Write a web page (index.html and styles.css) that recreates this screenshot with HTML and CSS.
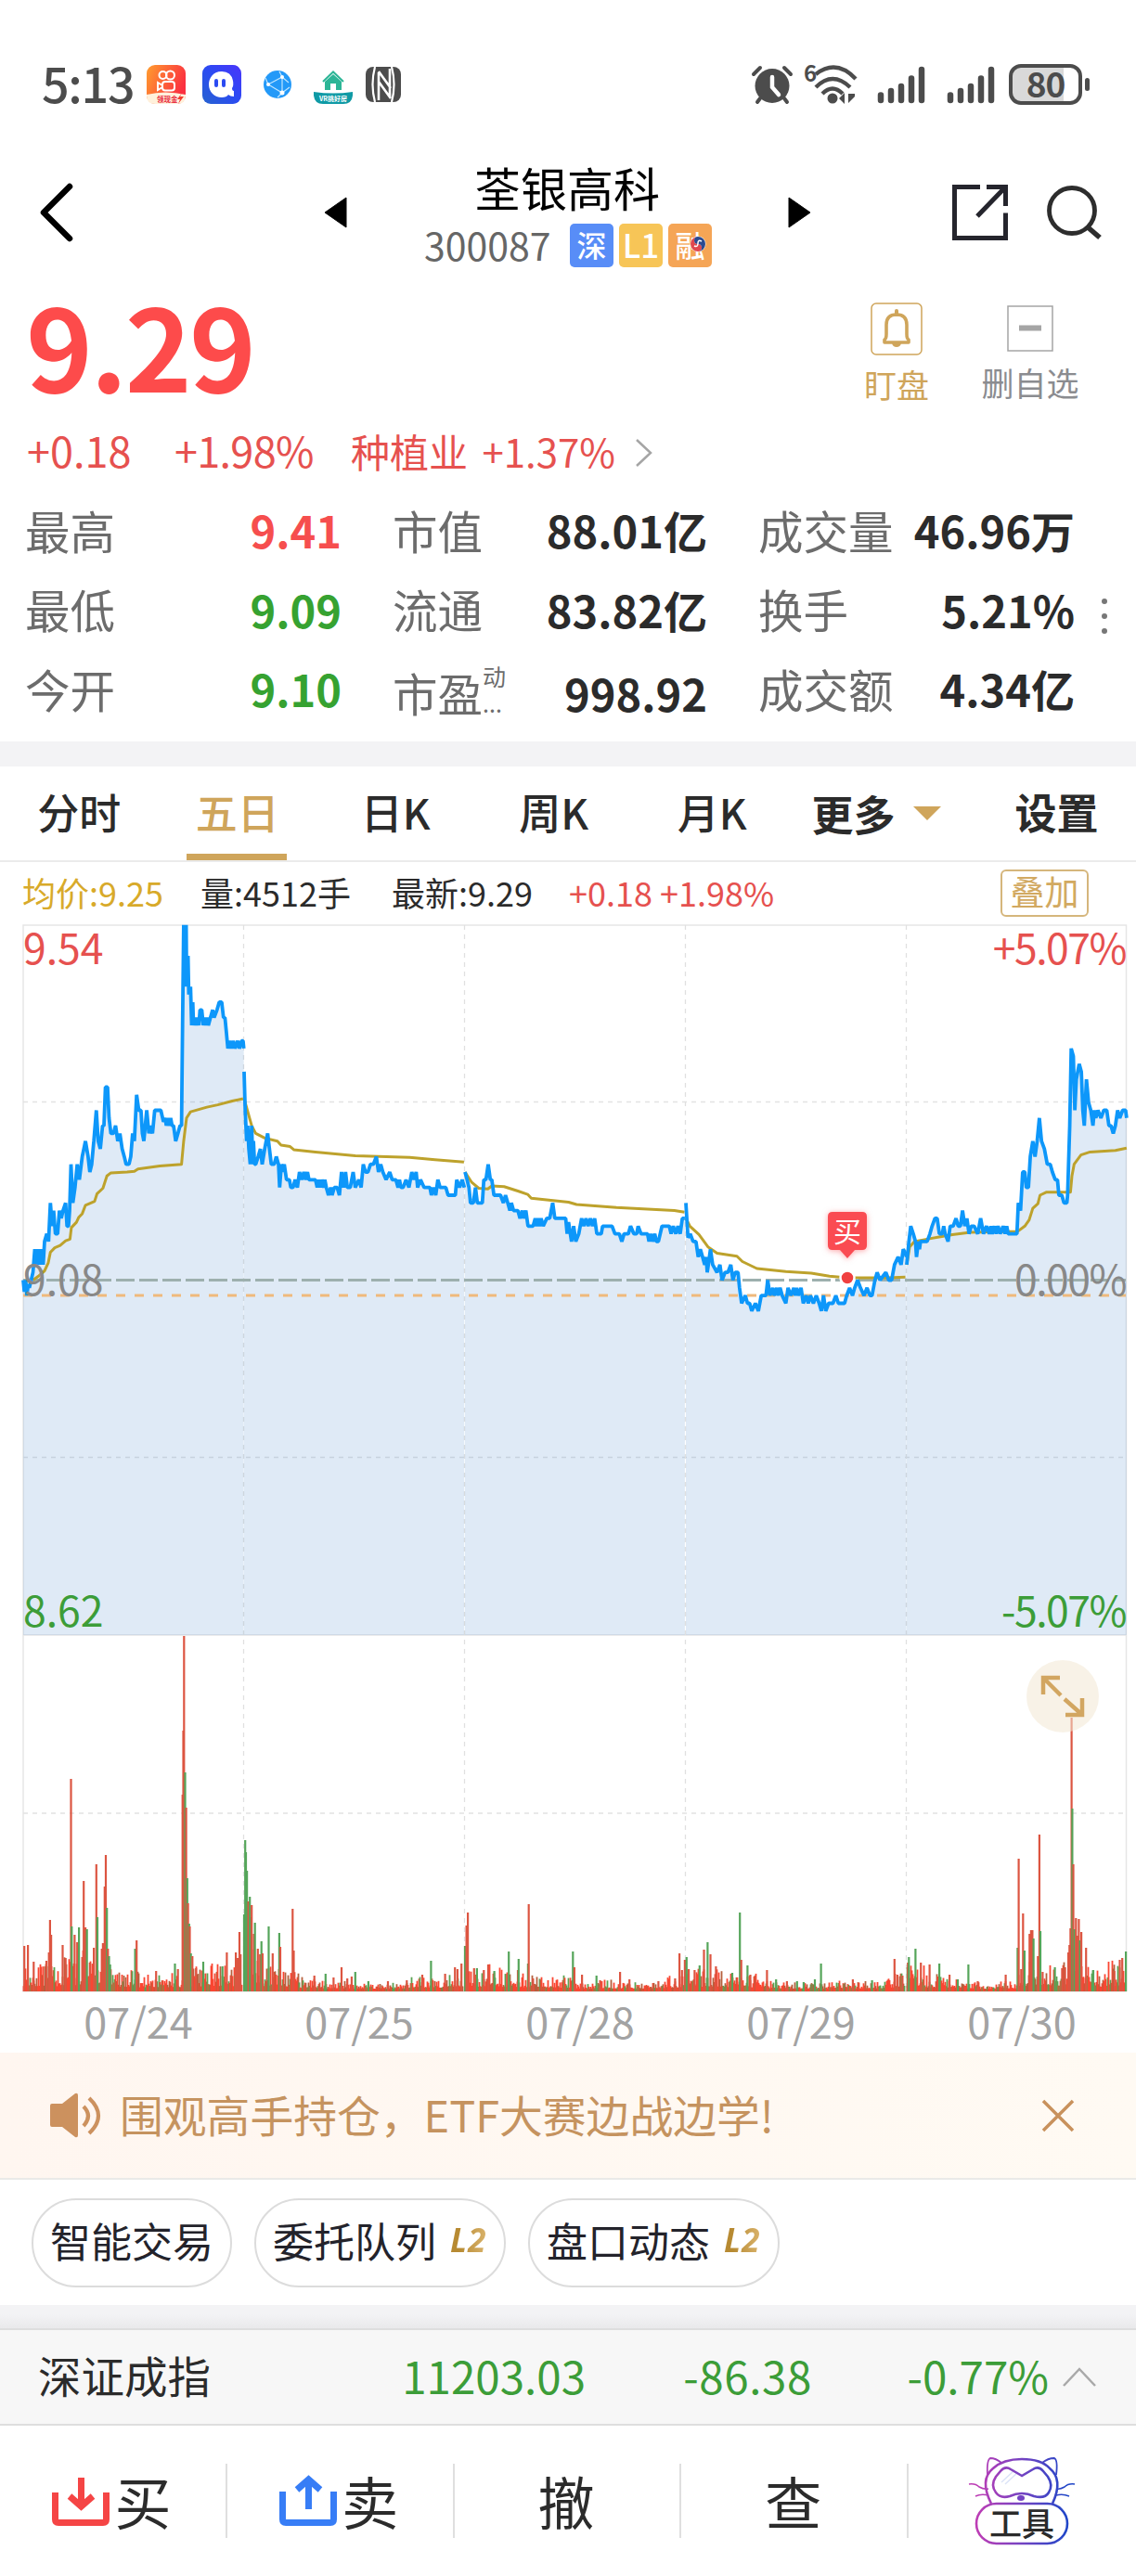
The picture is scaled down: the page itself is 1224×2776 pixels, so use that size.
FILE: index.html
```
<!DOCTYPE html>
<html lang="zh-CN">
<head>
    <meta charset="UTF-8">
    <meta name="viewport" content="width=device-width, initial-scale=1.0">
    <title>荃银高科 300087</title>
    <link rel="stylesheet" href="styles.css">
</head>
<body>
    <div class="status-bar">
        <span class="clock">5:13</span>
        <svg class="app-kuai" width="42" height="42" viewBox="0 0 42 42">
            <defs>
                <linearGradient id="kuai" x1="0" y1="0" x2="1" y2="0.4"><stop offset="0" stop-color="#ff9d2e"/><stop offset="1" stop-color="#fb3040"/></linearGradient>
            </defs>
            <rect width="42" height="42" rx="9" fill="url(#kuai)"/>
            <path d="M0 32Q20 27 42 32V33Q42 42 33 42H9Q0 42 0 33Z" fill="#fff1dc"/>
            <g fill="none" stroke="#fff" stroke-width="2">
                <circle cx="17.500" cy="11" r="4"/><circle cx="25.500" cy="11" r="4.500"/>
                <rect x="17" y="18" width="13" height="9.500" rx="3"/><path d="M17 22L12 19V27L17 24"/>
            </g>
            <text x="11" y="40" font-size="7.500" font-weight="bold" fill="#e8283a">领现金</text>
            <path d="M38 30L33 37H36L34 42L40 34H36Z" fill="#f33a2c"/>
        </svg>
        <svg class="app-chat" width="42" height="42" viewBox="0 0 42 42">
            <defs>
                <linearGradient id="chat" x1="0" y1="1" x2="1" y2="0"><stop offset="0" stop-color="#2763cf"/><stop offset="0.500" stop-color="#2b4bf2"/><stop offset="1" stop-color="#4a35fb"/></linearGradient>
            </defs>
            <rect width="42" height="42" rx="9" fill="url(#chat)"/>
            <path d="M21 7C11 7 7 15 7 21C7 29 13 35 21 35C24 35 27 34 28 32Q30 34 34 34V28Q32 28 32 25Q34 22 33 17Q31 7 21 7Z" fill="#fff"/>
            <rect x="13" y="15" width="4" height="9" rx="2" fill="#2b4bf2"/><rect x="21" y="15" width="4" height="9" rx="2" fill="#2b4bf2"/>
        </svg>
        <svg class="app-globe" width="30" height="30" viewBox="0 0 30 30">
            <circle cx="15" cy="15" r="15" fill="#2399f8"/>
            <path d="M5 15L20 7L27 13M5 15L20 24L28 18M20 7L20 24M5 15L2 8M20 7L17 1M20 24L15 29" stroke="#bfe5ff" stroke-width="1.200" fill="none"/>
            <circle cx="5" cy="15" r="2" fill="#fff"/><circle cx="20" cy="7" r="2" fill="#fff"/><circle cx="20" cy="24" r="2.500" fill="#fff"/>
        </svg>
        <svg class="app-house" width="42" height="42" viewBox="0 0 42 42">
            <path d="M10 18L21 7.500L32 18" fill="none" stroke="#2cb596" stroke-width="2"/>
            <path d="M12 18L21 10L30 18V27H24V20H18V27H12Z" fill="#2cb596"/>
            <path d="M0 29Q21 32 42 29V33Q41 42 32 42H10Q1 42 0 33Z" fill="#0f9aa5"/>
            <text x="6" y="39" font-size="7" font-weight="bold" fill="#fff">VR挑好房</text>
        </svg>
        <svg class="app-nfc" width="38" height="38" viewBox="0 0 38 38">
            <rect width="38" height="38" rx="8" fill="#4c4c4c"/>
            <path d="M10 0Q5 19 10 38M28 0Q33 19 28 38" stroke="#fff" stroke-width="2.200" fill="none"/>
            <path d="M14 6V36M14 5L27 23M14 16L27 34M26 2V33" stroke="#fff" stroke-width="2.600" fill="none"/>
        </svg>

        <div class="status-right">
            <svg width="44" height="42" viewBox="0 0 44 42">
                <circle cx="22" cy="22.500" r="18.500" fill="#4c4c4c"/>
                <path d="M2 10L9 3M42 10L35 3M9 36L6 40M35 36L38 40" stroke="#4c4c4c" stroke-width="4" stroke-linecap="round"/>
                <path d="M22 13V24L29 32" stroke="#fff" stroke-width="4.500" stroke-linecap="round" fill="none"/>
            </svg>
            <svg class="wifi" width="58" height="42" viewBox="0 0 58 42">
                <text x="0" y="18" font-size="24" font-weight="bold" fill="#4c4c4c">6</text>
                <g fill="none" stroke="#4c4c4c" stroke-width="4.300">
                    <path d="M13 10Q35-7 56 15"/><path d="M13 24Q31 6 50 24"/><path d="M20 31Q31 20 42 31"/>
                </g>
                <circle cx="31" cy="36" r="5.500" fill="#4c4c4c"/>
                <path d="M38 36L44 30V42ZM46 31V41M48 31V41L55 34V31Z" fill="#4c4c4c"/>
            </svg>
            <svg class="signal" width="52" height="41" viewBox="0 0 52 41" stroke="#4c4c4c" stroke-width="6.500" stroke-linecap="round">
                <path d="M4 31.500V37M15 27V37M26 22V37M37 13.500V37M48 4V37"/>
            </svg>
            <svg class="signal-two" width="52" height="41" viewBox="0 0 52 41" stroke="#4c4c4c" stroke-width="6.500" stroke-linecap="round">
                <path d="M4 31.500V37M15 27V37M26 22V37M37 13.500V37M48 4V37"/>
            </svg>
            <div class="battery"><span>80</span></div>
            <div class="battery-cap"></div>
        </div>
    </div>

    <header class="header">
        <svg class="back" width="36" height="64" viewBox="0 0 36 64"><path d="M31 4L3 32L31 60" fill="none" stroke="#000" stroke-width="6.500" stroke-linecap="round" stroke-linejoin="round"/></svg>
        <svg class="prev" width="26" height="34" viewBox="0 0 26 34"><path d="M1 17L24 1V33Z" stroke="#000" stroke-linejoin="round"/></svg>
        <div class="stock">
            <h1>荃银高科</h1>
            <div class="stock-code">
                <span>300087</span>
                <b class="tag tag-blue">深</b>
                <b class="tag tag-yellow">L1</b>
                <b class="tag tag-orange">融<svg width="18" height="18" viewBox="0 0 18 18"><circle cx="9" cy="9" r="8.500" fill="#fff"/><path d="M9 1A8 8 0 0 0 9 17A4 4 0 0 0 9 9A4 4 0 0 1 9 1" fill="#e0474f"/><path d="M9 1A8 8 0 0 1 9 17A4 4 0 0 0 9 9A4 4 0 0 1 9 1" fill="#2c4a90"/><path d="M5 11Q9 13 9 8Q9 4 13 6" stroke="#fff" stroke-width="1.500" fill="none"/></svg></b>
            </div>
        </div>
        <svg class="next" width="26" height="34" viewBox="0 0 26 34"><path d="M2 1L25 17L2 33Z" stroke="#000" stroke-linejoin="round"/></svg>
        <svg class="share" width="60" height="62" viewBox="0 0 60 62" fill="none" stroke="#25252d" stroke-width="5"><path d="M30 3.500H2.500V58.500H57.500V31.500M37 3.500H57.500V24M56 5L27 35"/></svg>
        <svg class="search" width="60" height="60" viewBox="0 0 60 60" fill="none" stroke="#2d2d2d" stroke-width="4.800"><circle cx="27" cy="28" r="24.500"/><path d="M43 45L57 57" stroke-width="5.500"/></svg>
    </header>

    <section class="quote">
        <div class="price">9.29</div>
        <div class="action action-watch">
            <svg width="56" height="58" viewBox="0 0 56 58" fill="none" stroke="#cfa55b">
                <rect x="1" y="1" width="54" height="55" rx="5" stroke-width="1.500"/>
                <path d="M15 43V40Q17 39 17 34V24Q17 13 28 13Q39 13 39 24V34Q39 39 41 40V43Z" stroke-width="3.600" stroke-linejoin="round"/>
                <path d="M28 9V13" stroke-width="4" stroke-linecap="round"/><path d="M23 44H33Q32 48 28 48Q24 48 23 44Z" fill="#cfa55b" stroke="none"/>
            </svg>
            <span>盯盘</span>
        </div>
        <div class="action action-delete">
            <svg width="50" height="50" viewBox="0 0 50 50"><rect x="1" y="1" width="48" height="48" fill="none" stroke="#a5a5a5" stroke-width="1.500"/><path d="M13 24.500H37" stroke="#a5a5a5" stroke-width="6"/></svg>
            <span>删自选</span>
        </div>
    </section>

    <div class="change">
        <span class="change-value">+0.18</span>
        <span class="change-rate">+1.98%</span>
        <span class="sector">种植业 <span>+1.37%</span></span>
        <svg width="20" height="32" viewBox="0 0 20 32"><path d="M2 2L17 16L2 30" fill="none" stroke="#a5a5a5" stroke-width="2.500"/></svg>
    </div>

    <section class="stats">
        <div class="stat"><span>最高</span><b class="up">9.41</b></div>
        <div class="stat"><span>市值</span><b>88.01亿</b></div>
        <div class="stat"><span>成交量</span><b>46.96万</b></div>
        <div class="stat"><span>最低</span><b class="down">9.09</b></div>
        <div class="stat"><span>流通</span><b>83.82亿</b></div>
        <div class="stat"><span>换手</span><b>5.21%</b></div>
        <div class="stat"><span>今开</span><b class="down">9.10</b></div>
        <div class="stat stat-pe"><span>市盈</span><small><i>动</i><i>...</i></small><b>998.92</b></div>
        <div class="stat"><span>成交额</span><b>4.34亿</b></div>
        <div class="more-dots"><i></i><i></i><i></i></div>
    </section>

    <div class="divider"></div>

    <nav class="tabs">
        <div class="tab">分时</div>
        <div class="tab active">五日</div>
        <div class="tab">日K</div>
        <div class="tab">周K</div>
        <div class="tab">月K</div>
        <div class="tab-more">更多<i></i></div>
        <div class="tab-set">设置</div>
    </nav>

    <div class="info">
        <span class="avg">均价:9.25</span>
        <span class="vol">量:4512手</span>
        <span class="last">最新:9.29</span>
        <span class="up-text">+0.18 +1.98%</span>
        <button class="overlay">叠加</button>
    </div>

    <section class="chart">
        <svg id="chart" width="1224" height="1216" viewBox="0 0 1224 1216">
            <g id="grid"></g>
            <g id="price"></g>
            <g id="volume"></g>
            <g class="axis">
                <text x="25" y="43" class="red">9.54</text>
                <text x="1213" y="43" class="red end">+5.07%</text>
                <text x="25" y="400" class="grey">9.08</text>
                <text x="1213" y="400" class="grey end">0.00%</text>
                <text x="25" y="757" class="green">8.62</text>
                <text x="1213" y="757" class="green end">-5.07%</text>
            </g>
            <g class="dates">
                <text x="149" y="1201">07/24</text>
                <text x="387" y="1201">07/25</text>
                <text x="625" y="1201">07/28</text>
                <text x="863" y="1201">07/29</text>
                <text x="1101" y="1201">07/30</text>
            </g>
            <!-- buy marker -->
            <path class="marker" d="M897 310H929Q934 310 934 315V346Q934 351 929 351H921L913 360L905 351H897Q892 351 892 346V315Q892 310 897 310Z" fill="#fa4b52"/>
            <text x="913" y="342" class="buy-mark">买</text>
            <circle cx="913" cy="381" r="7.500" fill="#f04040" stroke="#fff" stroke-width="2.500"/>
        </svg>
        <div class="expand">
            <svg width="46" height="46" viewBox="0 0 46 46" fill="none" stroke="#d2a661" stroke-width="4.500"><path d="M2 21V3H20M3 4L21 22M44 25V43H26M43 42L25 26"/></svg>
        </div>
    </section>

    <div class="notice">
        <svg width="56" height="50" viewBox="0 0 56 50">
            <path d="M2 12H13L27 1Q30 0 30 3V46Q30 49 27 48L13 37H2Q0 37 0 35V14Q0 12 2 12Z" fill="#cc915e"/>
            <path d="M36 15Q46 25 36 36M42 6Q62 25 42 44" fill="none" stroke="#cc915e" stroke-width="4.200"/>
        </svg>
        <span>围观高手持仓，ETF大赛边战边学!</span>
        <svg class="close" width="36" height="36" viewBox="0 0 36 36"><path d="M2 2L34 34M34 2L2 34" stroke="#c8915c" stroke-width="3.500"/></svg>
    </div>

    <div class="pills">
        <div class="pill">智能交易</div>
        <div class="pill pill-l2">委托队列<em>L2</em></div>
        <div class="pill pill-l2">盘口动态<em>L2</em></div>
    </div>

    <div class="divider divider-shadow"></div>

    <div class="index-bar">
        <span class="index-name">深证成指</span>
        <span class="index-price">11203.03</span>
        <span class="index-diff">-86.38</span>
        <span class="index-rate">-0.77%</span>
        <svg width="36" height="22" viewBox="0 0 36 22"><path d="M1 20L18 2L35 20" fill="none" stroke="#a9a9a9" stroke-width="2.500"/></svg>
    </div>

    <footer class="trade-bar">
        <div class="trade">
            <svg width="62" height="56" viewBox="0 0 62 56" fill="none" stroke="#f54545" stroke-width="7"><path d="M3.500 19V48Q3.500 51.500 7 51.500H55Q58.500 51.500 58.500 48V19"/><path d="M31.500 3V34M19 23L31.500 34L44 23"/></svg>
            <span>买</span>
        </div>
        <div class="trade">
            <svg width="62" height="60" viewBox="0 0 62 60" fill="none" stroke="#377df6" stroke-width="7"><path d="M3.500 20V50Q3.500 53.500 7 53.500H55Q58.500 53.500 58.500 50V20"/><path d="M31.500 39V8M19 18L31.500 7L44 18"/></svg>
            <span>卖</span>
        </div>
        <div class="trade">撤</div>
        <div class="trade">查</div>
        <div class="trade trade-tool">
            <svg width="116" height="96" viewBox="0 0 116 96" fill="none" stroke="url(#cat)" stroke-width="2.600">
                <defs>
                    <linearGradient id="cat" gradientUnits="userSpaceOnUse" x1="10" y1="0" x2="106" y2="0"><stop offset="0" stop-color="#bd3db5"/><stop offset="0.500" stop-color="#7443c2"/><stop offset="1" stop-color="#2146c8"/></linearGradient>
                </defs>
                <path d="M25 51Q12 25 27 13Q38 3 58 3Q79 3 88 13Q103 25 91 51"/>
                <path d="M21 20Q20 4 24 2Q30 2 36 7M95 20Q97 4 93 2Q86 2 80 7" stroke-width="1.800"/>
                <path d="M36 28L50 15M40 30L54 17" stroke="#dbe3f7" stroke-width="1.500"/>
                <path d="M58 21L46 14Q40 10 35 16L30 22Q24 31 30 39Q35 46 45 43Q58 37 71 43Q83 46 87 39Q92 31 86 22L81 16Q76 10 70 14Z"/>
                <path d="M1 30Q8 29 12 33Q17 36 22 35M8 43Q14 40 22 42M115 30Q108 29 104 33Q99 36 95 35M109 43Q102 40 95 42" stroke-width="1.500"/>
                <ellipse cx="57" cy="45" rx="4" ry="3" fill="#7443c2" stroke="none"/>
                <rect x="9" y="51" width="98" height="43" rx="21.500" fill="#fff"/>
                <text x="58" y="86" class="tool-text">工具</text>
            </svg>
        </div>
    </footer>
    <script src="chart.js"></script>
</body>
</html>
```
FILE: styles.css
```
* {
    box-sizing: border-box;
}

body {
    margin: 0;
    width: 1224px;
    background: #fff;
    color: #2b2b2b;
    font-family: "Noto Sans CJK SC", sans-serif;
    line-height: 1;
}

svg {
    display: block;
    flex-shrink: 0;
    overflow: visible;
}

i, em {
    font-style: normal;
}

.status-bar {
    display: flex;
    align-items: center;
    height: 148px;
    padding: 34px 50px 0 45px;
    color: #4c4c4c;
}

.clock {
    width: 113px;
    padding-bottom: 4px;
    font-size: 52px;
    font-weight: 500;
    letter-spacing: -1.3px;
}

.app-chat {
    margin-left: 18px;
}

.app-globe {
    margin-left: 24px;
}

.app-house {
    margin-left: 24px;
}

.app-nfc {
    margin-left: 14px;
}

.status-right {
    display: flex;
    align-items: center;
    margin-left: auto;
}

.wifi {
    margin-left: 12px;
}

.signal {
    margin-left: 21px;
}

.signal-two {
    margin-left: 23px;
}

.battery {
    width: 79px;
    height: 44px;
    margin-left: 15px;
    border: 4px solid #4c4c4c;
    border-radius: 13px;
    background: linear-gradient(to right, #d9d9d9 78%, #fff 78%);
    font-size: 37px;
    font-weight: bold;
    line-height: 33px;
    text-align: center;
    letter-spacing: -1px;
}

.battery-cap {
    width: 5px;
    height: 14px;
    margin-left: 3px;
    border-radius: 3px;
    background: #4c4c4c;
}

.header {
    display: flex;
    align-items: center;
    height: 162px;
    padding-left: 44px;
}

.prev {
    margin-left: 269px;
}

.stock {
    width: 310px;
    margin-left: 82px;
    padding-top: 5px;
}

.stock h1 {
    margin: 0 0 15px -2px;
    color: #000;
    font-size: 50px;
    font-weight: normal;
    line-height: 48px;
    text-align: center;
}

.stock-code {
    display: flex;
    gap: 6px;
    height: 47px;
    color: #666;
    font-size: 41px;
    line-height: 47px;
}

.stock-code span {
    width: 151px;
}

.tag {
    position: relative;
    top: 1px;
    width: 47px;
    height: 47px;
    border-radius: 5px;
    color: #fff;
    font-size: 32px;
    font-weight: 500;
    line-height: 44px;
    text-align: center;
}

.tag-blue {
    background: #588df7;
}

.tag-yellow {
    background: #f7c557;
    font-size: 35px;
}

.tag-orange {
    background: #f5a556;
}

.tag svg {
    position: absolute;
    top: 13px;
    left: 23px;
}

.next {
    margin-left: 81px;
}

.share {
    margin-left: 152px;
}

.search {
    margin-left: 42px;
}

.quote {
    display: flex;
    height: 135px;
    padding-left: 28px;
}

.price {
    width: 886px;
    margin-top: -1px;
    color: #fd4b4b;
    font-size: 122px;
    font-weight: bold;
    line-height: 122px;
    letter-spacing: -2.5px;
}

.action {
    display: flex;
    flex-direction: column;
    align-items: center;
    width: 104px;
    padding-top: 16px;
    color: #cfa55b;
    font-size: 35px;
}

.action span {
    margin-top: 12px;
}

.action-delete {
    width: 120px;
    margin-left: 32px;
    padding-top: 19px;
    color: #8b8c90;
}

.action-delete span {
    margin-top: 15px;
}

.change {
    display: flex;
    align-items: center;
    height: 85px;
    padding: 0 0 7px 29px;
    color: #e6514f;
    font-size: 45px;
}

.change-value {
    width: 159px;
}

.change-rate {
    width: 190px;
    letter-spacing: -0.7px;
}

.sector {
    width: 306px;
    padding-top: 3px;
    font-size: 42px;
    white-space: nowrap;
}

.sector span {
    margin-left: 6px;
}

.change svg {
    margin-top: 8px;
}

.stats {
    position: relative;
    display: grid;
    grid-template-columns: 341px 339px 341px;
    grid-auto-rows: 85.5px;
    column-gap: 55px;
    height: 269px;
    padding-left: 27px;
}

.stat {
    display: flex;
    align-items: center;
    padding-bottom: 4px;
    color: #6c6c6c;
    font-size: 48.5px;
}

.stat b {
    margin-left: auto;
    color: #2b2b2b;
    font-size: 47px;
}

.stat .up {
    color: #f64e4e;
}

.stat .down {
    color: #36a231;
}

.stat-pe {
    padding-bottom: 0;
    padding-top: 5px;
}

.stat small {
    display: flex;
    flex-direction: column;
    height: 60px;
    font-size: 25px;
}

.stat small i + i {
    margin-top: 4px;
}

.more-dots {
    position: absolute;
    top: 115px;
    left: 1187px;
    display: grid;
    gap: 10px;
}

.more-dots i {
    width: 6px;
    height: 6px;
    border-radius: 50%;
    background: #777;
}

.divider {
    height: 27px;
    background: #f3f3f5;
}

.tabs {
    display: flex;
    height: 103px;
    border-bottom: 2px solid #ebebeb;
    font-size: 45px;
    font-weight: 500;
    line-height: 97px;
}

.tab {
    position: relative;
    width: 170.5px;
    text-align: center;
}

.active {
    color: #cfa55b;
}

.active::after {
    content: "";
    position: absolute;
    left: 30px;
    bottom: 0;
    width: 108px;
    height: 7px;
    background: #cfa55b;
}

.tab-more {
    display: flex;
    align-items: center;
    gap: 19px;
    margin-left: 22px;
    font-weight: bold;
}

.tab-more i {
    border: 15px solid transparent;
    border-top-color: #cfa55b;
    border-bottom: 0;
}

.tab-set {
    margin-left: 80px;
    font-weight: bold;
}

.info {
    display: flex;
    align-items: center;
    height: 67px;
    padding-left: 24px;
    font-size: 36px;
    line-height: 60px;
}

.info span {
    padding-bottom: 3px;
}

.avg {
    width: 192px;
    color: #d8aa2a;
}

.vol {
    width: 206px;
}

.last {
    width: 191px;
}

.up-text {
    width: 465px;
    color: #e6514f;
}

.overlay {
    width: 95px;
    height: 51px;
    padding: 0 0 5px;
    border: 2px solid #d5b67c;
    border-radius: 6px;
    background: #fff;
    color: #d2a961;
    font-family: inherit;
    font-size: 37px;
    line-height: 40px;
}

.chart {
    position: relative;
    height: 1216px;
}

.axis text {
    font-size: 44.5px;
}

.axis .end {
    letter-spacing: -1.5px;
    text-anchor: end;
}

.red {
    fill: #e6514f;
}

.grey {
    fill: #888;
}

.green {
    fill: #3c9d38;
}

.dates text {
    fill: #a3a3a3;
    font-size: 45px;
    text-anchor: middle;
}

.marker {
    filter: drop-shadow(0 1px 3px rgba(250, 75, 82, 0.5));
}

.buy-mark {
    fill: #fff;
    font-size: 30px;
    text-anchor: middle;
}

.expand {
    position: absolute;
    top: 793px;
    left: 1106px;
    display: flex;
    align-items: center;
    justify-content: center;
    width: 78px;
    height: 78px;
    border-radius: 50%;
    background: rgba(243, 231, 211, 0.55);
}

.notice {
    display: flex;
    align-items: center;
    height: 137px;
    padding-left: 54px;
    border-bottom: 2px solid #eaeae8;
    background: linear-gradient(to right, #fff6f0, #fffaf3);
    color: #c5935f;
    font-size: 46.8px;
}

.notice span {
    width: 1012px;
    padding: 0 0 3px 19px;
    white-space: nowrap;
}

.pills {
    display: flex;
    align-items: center;
    gap: 24px;
    height: 135px;
    padding-left: 34px;
}

.pill {
    display: flex;
    width: 216px;
    height: 96px;
    padding-left: 18px;
    border: 2px solid #dcdcdc;
    border-radius: 48px;
    color: #23232b;
    font-size: 44px;
    line-height: 86px;
}

.pill-l2 {
    width: 271px;
}

.pill em {
    margin-left: 15px;
    padding-right: 8px;
    background: linear-gradient(to right, #b78a32 20%, #e2bd7a);
    -webkit-background-clip: text;
    background-clip: text;
    color: transparent;
    font-family: "Open Sans", sans-serif;
    font-size: 35px;
    font-style: italic;
    font-weight: bold;
    letter-spacing: 1px;
}

.divider-shadow {
    height: 25px;
    background: linear-gradient(#f3f3f5 40%, #e9e9eb);
}

.index-bar {
    display: flex;
    align-items: center;
    height: 105px;
    padding: 0 0 0 41px;
    border-top: 2px solid #dedede;
    border-bottom: 2px solid #dedede;
    background: #f7f7f7;
    color: #3c9d38;
    font-size: 47.5px;
}

.index-bar span {
    padding-bottom: 4px;
    text-align: right;
}

.index-bar .index-name {
    width: 190px;
    color: #2b2b2b;
    font-size: 46.5px;
    text-align: left;
}

.index-price {
    width: 400px;
}

.index-diff {
    width: 244px;
    letter-spacing: 0.6px;
}

.index-rate {
    width: 255px;
}

.index-bar svg {
    margin-left: 15px;
}

.trade-bar {
    display: flex;
    align-items: center;
    height: 162px;
    font-size: 61px;
}

.trade {
    display: flex;
    align-items: center;
    justify-content: center;
    width: 244.8px;
    height: 80px;
    padding-right: 2px;
    border-right: 2px solid #dfdfdf;
    line-height: 70px;
}

.trade span {
    margin-left: 5px;
}

.trade:last-child {
    border-right: 0;
}

.tool-text {
    fill: #2b2b2b;
    stroke: none;
    font-size: 35px;
    font-weight: 500;
    text-anchor: middle;
}
```
FILE: chart.js
```
// price panel 1..766, volume panel 766..1150, 238px for each day
var LEFT = 25, DAY = 238, MID = 383.5, TICK = 8.32, PRICE_BOTTOM = 766, BASE = 1150;
var UNIT = 1 / 2.562;

// price / avg: "time,ticks above 9.08"; vol: "time,height,colour"
var days = [
    {
        start: 63,
        price: "63,0 66,-1.5 70,0 73,-2 77,-.5 80,-1 85,0 90,1 95,4 100,2 105,4 110,2 114,4 118,2 122,5 128,6 133,5 138,10 143,7 147,9 152,6 158,6 163,9 168,8 173,9 180,10 184,7 188,7 191,9 195,15 200,10 206,12 212,15 218,13 226,16 235,18 242,16 247,14 252,15 258,18 265,22 270,18 276,17 282,20 286,20 290,25 296,25 300,21 305,19 312,19 318,20 324,18 330,19 336,17 342,16 347,15 355,15 360,16 365,19 370,18 376,24 382,22 388,22 392,19 396,18 400,20 404,22 410,19 414,20 420,19 426,22 443,22 450,20.5 455,21 458,20 462,21 466,20 470,21 474,20 478,20 484,18 490,19 496,20 500,20 503,33 506,46 510,38 513,46 514,40 518,42 520,37 525,38 528,33 531,36 533,33 537,34 540,33 545,34 548,33 551,35 556,35 560,33 564,34 568,33 571,34 574,33 580,34 586,35 590,34 598,35 604,36 611,36 616,34 620,34 624,32 628,30 633,31 638,30 643,31 648,30 655,31 660,30 666,31 670,31 672,30",
        avg: "90,0 105,.5 122,1.2 132,2.2 138,3.6 150,4.2 165,4.5 180,5.1 192,5.3 196,6.8 210,7.5 216,8.1 226,8.6 235,9.7 260,10.2 267,11.2 283,11.9 294,13.5 305,13.9 350,14 370,14.1 380,14.4 440,14.8 500,15 506,18 514,21 525,21.8 570,22.4 600,22.7 640,23.2 670,23.5",
        level: [15, 14, 18, 22, 18, 11, 10, 10, 10, 13, 15, 14],
        vol: "66,49,r 76,50,r 92,32,r 127,33,r 134,42,r 137,77,r 140,61,r 172,50,r 180,36,r 195,229,r 197,70,g 205,61,r 212,53,r 217,69,g 226,37,r 230,119,r 235,69,r 239,67,g 247,31,r 258,47,r 265,137,r 268,80,g 280,46,r 283,52,r 286,50,r 288,113,r 291,147,r 294,90,g 297,46,r 300,38,g 303,29,g 372,46,g 376,55,r 430,22,r 482,30,g 490,24,r 503,212,r 505,281,r 507,383,r 510,236,g 513,198,r 516,122,g 518,95,r 521,73,g 523,70,r 526,41,g 530,38,r 540,25,r 560,32,g 613,27,g 625,42,r 650,42,r 655,36,r 660,64,r 663,40,r"
    },
    {
        start: 673,
        price: "673,27 676,22 680,18 683,20 686,17 690,15 692,18 694,20 697,15 699,18 702,15 705,15 712,16 718,17 723,15 730,17 738,19 743,17 748,15 756,15 762,16 768,15 771,12 776,15 780,14 784,15 790,13 798,13 802,12 808,12 814,13 820,12 826,14 832,13 838,14 843,13 848,14 852,13 870,13 875,12 879,13 883,12 888,13 893,12 896,13 900,12 906,11 912,12 916,11 922,12 930,12 936,11 942,14 948,12 953,14 958,12 966,12 974,14 980,12 990,13 996,12 1002,15 1008,14 1015,14 1022,15 1030,15 1038,16 1044,14 1050,15 1056,14 1065,13 1075,14 1082,13 1092,13 1098,12 1102,13 1106,12 1112,12 1120,13 1128,12 1136,14 1142,13 1148,14 1152,12 1160,13 1170,12 1186,12 1190,11 1196,12 1202,11 1208,13 1214,12 1230,12 1236,11 1256,11 1260,13 1268,12 1275,13 1281,12",
        avg: "673,23.5 682,22 694,20 705,19 730,18.4 765,18 775,17.5 800,17.3 810,16.9 870,16.6 980,16.1 1130,15.9 1200,15.6 1280,15.3",
        level: [24, 15, 11, 7, 5, 5, 4, 4, 4, 7, 8, 12],
        vol: "673,83,g 676,163,g 678,150,g 681,130,g 685,97,r 689,102,g 691,80,g 694,93,r 700,62,r 703,74,g 711,46,r 717,40,r 721,54,g 724,41,r 741,70,g 752,41,r 770,63,g 773,48,r 807,89,r 810,44,r 867,17,r 898,19,g 920,15,r 942,26,r 958,14,r 970,16,r 980,21,g 1016,11,g 1070,11,r 1122,12,r 1165,18,r 1189,33,g 1228,19,r 1255,26,r 1262,24,r 1273,30,r"
    },
    {
        start: 1282,
        price: "1282,14 1288,13 1293,12 1297,10 1305,10 1311,12 1316,10 1330,10 1334,13 1340,13 1346,15 1352,13 1356,13 1362,11 1380,11 1388,10 1394,11 1400,10 1406,9 1410,10 1416,9 1428,9 1434,8 1440,9 1444,8 1450,9 1456,7 1470,7 1476,8 1480,7 1484,8 1488,7 1492,8 1498,7 1508,8 1516,8 1524,10 1530,8 1560,8 1564,6 1568,7.5 1576,5 1582,7 1588,5 1596,6 1604,8 1610,7 1616,8 1622,7 1628,8 1634,7 1640,8 1646,6 1658,6 1662,7 1688,7 1696,6 1708,6 1715,5 1721,6 1733,6 1739,7 1748,6 1756,6 1760,7 1768,6 1786,6 1790,5 1795,6 1800,5 1806,6 1810,5 1816,5 1826,7 1846,7 1851,6 1857,7 1864,6 1870,7 1876,6 1882,8 1889,8",
        avg: "1282,14 1300,12.7 1320,11.9 1345,11.8 1356,12.2 1390,12.1 1430,11.5 1455,11.1 1465,10.6 1568,10.1 1590,9.8 1700,9.4 1860,9 1888,8.8",
        level: [12, 14, 11, 10, 7, 8, 4, 6, 4, 4, 5, 8],
        vol: "1282,49,g 1286,71,r 1290,85,r 1307,25,r 1315,25,g 1334,23,r 1346,29,r 1363,22,g 1398,19,r 1403,43,g 1428,23,r 1430,35,g 1456,30,g 1458,94,r 1470,14,r 1580,43,g 1584,26,r 1605,18,r 1645,17,g 1655,12,r 1710,21,r 1736,13,r 1816,11,r 1862,14,r 1874,41,r 1881,23,r 1889,34,r"
    },
    {
        start: 324,
        price: "324,10 330,5.5 336,6 344,5 352,5 358,3 364,4 370,3 376,2 380,3 383,1 386,2 392,4 398,2 410,1 418,2 424,0 432,1 440,1 448,2 454,0 460,1 468,1 472,-1 478,-3 488,-2 494,-3 500,-3 506,-4 516,-3 524,-4 532,-2 545,-2 550,0 556,-2 564,-1 568,-2 575,-1 579,-2 584,-1 590,-2 600,-3 606,-1 614,-2 622,-1 626,-2 630,-1 634,-2 642,-1 648,-3 656,-2 662,-3 668,-2 676,-3 684,-2 692,-3 698,-4 704,-2 710,-4 718,-3 730,-3 738,-2 745,-3 754,-3 762,-3 768,-2 776,-1 784,-2 790,-1 798,0 806,-1 816,-2 824,-1 832,-2 838,-2 846,0 852,1 860,0 876,1 884,0 892,0 900,2 910,3 918,2 924,4 930,3.5 933,3",
        avg: "324,8 335,7 360,5.9 385,4.3 410,3.5 465,3.1 480,2.4 520,1.5 600,1.1 670,.9 720,.5 770,.3 880,.3 930,.4",
        level: [12, 13, 9, 9, 5, 4, 4, 4, 6, 5, 5, 9],
        vol: "326,37,g 332,24,r 348,23,r 362,28,g 374,45,r 384,53,g 392,40,r 407,27,r 452,20,g 473,85,g 477,34,r 494,28,g 502,18,r 548,23,r 573,13,g 603,11,r 631,11,g 649,10,g 680,13,g 697,30,g 785,13,r 838,12,g 900,35,r 908,18,r 922,17,r"
    },
    {
        start: 934,
        price: "934,2 940,5 945,7 952,6 958,5 961,3 966,5 969,4 972,5 978,5 990,5 998,6 1004,7 1012,8 1018,8 1024,6 1032,6 1036,7 1040,6 1048,5 1054,7 1062,7 1070,8 1076,7 1082,7 1088,9 1094,7 1100,8 1106,6 1112,7 1120,7 1130,6 1138,8 1146,6 1154,7 1162,6 1166,7 1170,6 1176,7 1181,6 1186,7 1192,6 1200,7 1205,6 1210,7 1214,6 1225,6 1238,6 1242,10 1248,9 1254,14 1260,14 1264,12 1270,12 1275,16 1282,18 1288,16 1294,18 1300,21 1306,18 1314,17 1322,15 1330,15 1336,14 1344,13 1350,13 1354,11 1362,11 1368,10 1376,10 1378,11 1384,20 1388,30 1394,29 1398,22 1402,26 1410,28 1416,27 1420,22 1424,20 1430,26 1436,23 1442,22 1448,20 1452,22 1456,21 1462,22 1470,21 1478,22 1486,22 1492,20 1498,20 1504,19 1510,20 1516,22 1522,21 1530,22 1538,22 1541,21",
        avg: "934,2 942,4.3 955,5 1000,5.4 1060,5.9 1110,6.2 1240,6.3 1260,7 1272,7.8 1282,9.3 1296,9.9 1302,11 1320,11.4 1386,11.4 1390,13.5 1396,15 1415,16.2 1440,16.6 1510,16.8 1541,17.1",
        level: [14, 9, 9, 4, 3, 5, 16, 17, 16, 16, 11, 16],
        vol: "936,26,g 937,31,r 940,37,g 958,46,g 973,31,r 997,29,r 1024,30,g 1052,18,r 1075,13,g 1104,29,g 1130,11,r 1207,18,r 1240,47,g 1243,143,r 1250,24,r 1255,84,r 1259,44,g 1273,62,r 1277,66,r 1281,66,r 1284,57,g 1296,38,r 1300,169,r 1303,65,g 1309,21,r 1343,26,g 1363,25,r 1371,26,r 1380,42,r 1383,50,r 1386,68,r 1389,295,r 1391,197,g 1394,137,r 1397,67,g 1401,79,r 1405,60,r 1409,78,r 1412,55,g 1416,64,r 1429,47,r 1449,23,g 1507,22,r 1522,34,r 1529,36,r 1539,43,g"
    }
];

function parse(text) {
    return text.split(" ").map(function (p) { return p.split(","); });
}

function line(x1, y1, x2, y2, colour, width, dash) {
    return '<path d="M' + x1 + ' ' + y1 + 'L' + x2 + ' ' + y2 + '" stroke="' + colour + '" stroke-width="' + width + '"' +
        (dash ? ' stroke-dasharray="' + dash + '"' : '') + '/>';
}

// small repeatable random so the quiet bars do not change on reload
var seed = 11;
function rand() {
    seed = (seed * 16807) % 2147483647;
    return seed / 2147483647;
}

var grid = '<path d="M25 1H1213.5V1150H25ZM25 766H1213.5" fill="none" stroke="#e6e6e6" stroke-width="1.5"/>';
[191.5, 574.5, 958].forEach(function (y) {
    grid += line(25, y, 1213, y, "#e2e2e2", 1.3, "5 5");
});
for (var k = 1; k < 5; k++) {
    grid += line(LEFT + k * DAY - 0.5, 1, LEFT + k * DAY - 0.5, 1150, "#e0e0e0", 1.3, "5 5");
}

var areas = "", strokes = "", bars = "";
days.forEach(function (day, n) {
    function px(t) { return (LEFT + n * DAY + (t - day.start) * UNIT).toFixed(1); }
    function py(v) { return (MID - v * TICK).toFixed(1); }
    function path(text) {
        return parse(text).map(function (p) { return px(p[0]) + " " + py(p[1]); }).join("L");
    }
    var d = path(day.price);
    areas += '<path d="M' + px(day.start) + ' ' + PRICE_BOTTOM + 'L' + d + 'V' + PRICE_BOTTOM + 'Z" fill="rgba(96,150,210,.2)"/>';
    strokes += '<path d="M' + path(day.avg) + '" fill="none" stroke="#bda22c" stroke-width="3" stroke-linejoin="round"/>';
    strokes += '<path d="M' + d + '" fill="none" stroke="#0d97fa" stroke-width="3.8" stroke-linejoin="bevel"/>';

    for (var i = 0; i < 236; i++) {
        var level = day.level[Math.floor(i / 236 * 12)];
        var h = 2 + level * (0.25 + Math.pow(rand(), 2) * 1.7);
        var x = LEFT + n * DAY + i + 0.5;
        var r = rand();
        bars += line(x, BASE, x, (BASE - h).toFixed(1), r < 0.62 ? "#fa4632" : r < 0.82 ? "#b5603d" : "#5aa352", 1.8);
    }
    parse(day.vol).forEach(function (p) {
        bars += line(px(p[0]), BASE, px(p[0]), BASE - p[1], p[2] == "r" ? "#dc5541" : "#55a55a", 2.2);
    });
});

document.getElementById("grid").innerHTML = grid;
document.getElementById("price").innerHTML = areas +
    line(25, MID, 1213, MID, "#9db0ae", 3, "20 5") +
    line(25, 400, 1213, 400, "#efb97c", 3, "10 10") + strokes;
document.getElementById("volume").innerHTML = bars;
```
